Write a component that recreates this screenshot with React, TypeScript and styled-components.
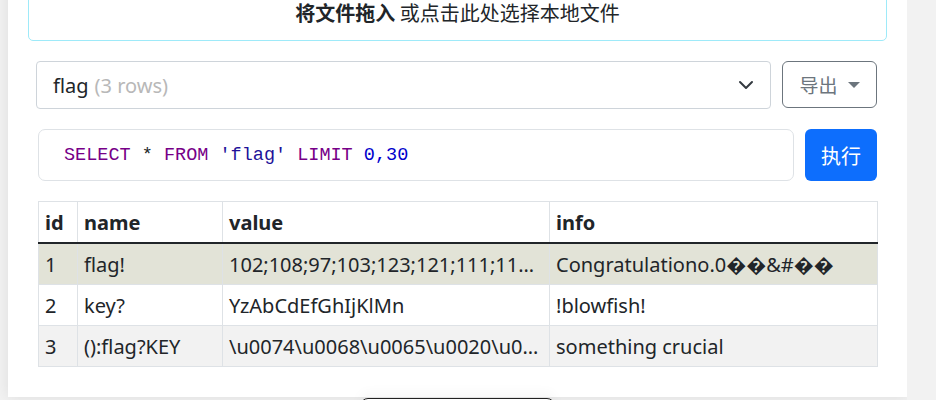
import React from "react";
import styled, { createGlobalStyle } from "styled-components";

const Global = createGlobalStyle`
  html, body { margin: 0; padding: 0; }
  body {
    background: #f2f2f2;
    font-family: "Noto Sans", "Noto Sans CJK SC", sans-serif;
    color: #212529;
    overflow: hidden;
  }
`;

const Page = styled.div`
  padding-left: 8px;
  width: 899px;
  height: 400px;
  overflow: hidden;
`;

const Panel = styled.div`
  background: #fff;
  margin-top: -37px;
  padding: 0 20px 30px;
  box-shadow: 0 0 14px rgba(0, 0, 0, 0.09);
`;

const DropZone = styled.div`
  height: 78px;
  border: 1px solid #9eeaf9;
  border-radius: 5px;
  box-sizing: border-box;
  display: flex;
  align-items: flex-end;
  justify-content: center;
  padding-bottom: 13px;
  font-size: 20px;
  font-family: "Noto Sans CJK SC", sans-serif;
  color: #212529;
  b { font-weight: 700; }
`;

const Content = styled.div`
  padding: 20px 10px 0 8px;
  display: flex;
  flex-direction: column;
  gap: 20px;
`;

const Row = styled.div<{ $inset?: number }>`
  display: flex;
  gap: 11px;
  padding-left: ${(p) => p.$inset ?? 0}px;
`;

const Select = styled.div`
  flex: 1;
  height: 48px;
  box-sizing: border-box;
  border: 1px solid #ced4da;
  border-radius: 4px;
  display: flex;
  align-items: center;
  padding: 0 16px 0 16px;
  font-size: 20px;
  color: #212529;
`;

const Muted = styled.span`
  color: #b8b8b8;
  margin-left: 6px;
`;

const Grow = styled.span`
  flex: 1;
`;

const OutlineBtn = styled.button`
  width: 95px;
  height: 47px;
  border: 1px solid #6c757d;
  border-radius: 6px;
  background: #fff;
  color: #6c757d;
  font-size: 19px;
  font-family: "Noto Sans CJK SC", sans-serif;
  display: flex;
  align-items: center;
  justify-content: center;
  gap: 10px;
  padding: 0;
`;

const Caret = styled.span`
  width: 0;
  height: 0;
  border-left: 6px solid transparent;
  border-right: 6px solid transparent;
  border-top: 6px solid #6c757d;
`;

const SqlBox = styled.div`
  flex: 1;
  height: 52px;
  box-sizing: border-box;
  border: 1px solid #dee2e6;
  border-radius: 7px;
  display: flex;
  align-items: center;
  padding-left: 25px;
`;

const Code = styled.code`
  font-family: "Liberation Mono", monospace;
  font-size: 18.5px;
  white-space: pre;
  color: #212529;
`;

const Tok = styled.span<{ $c: string }>`
  color: ${(p) => p.$c};
`;

const PrimaryBtn = styled.button`
  width: 72px;
  height: 52px;
  border: none;
  border-radius: 6px;
  background: #0d6efd;
  color: #fff;
  font-size: 20px;
  font-family: "Noto Sans CJK SC", sans-serif;
  padding: 0;
`;

const Table = styled.table`
  margin-left: 2px;
  width: 839px;
  border-collapse: collapse;
  table-layout: fixed;
  font-size: 20px;
  font-family: "Noto Sans", "DejaVu Sans", sans-serif;
`;

const Th = styled.th`
  text-align: left;
  font-weight: 700;
  height: 40px;
  padding: 0 6px;
  border: 1px solid #dee2e6;
  border-bottom: 2px solid #212529;
`;

const Tr = styled.tr<{ $bg: string }>`
  background: ${(p) => p.$bg};
`;

const Td = styled.td`
  height: 40px;
  padding: 0 6px;
  border: 1px solid #dee2e6;
  white-space: nowrap;
  overflow: hidden;
  text-overflow: ellipsis;
`;

const Floating = styled.div`
  margin: 1px auto 0;
  width: 195px;
  height: 30px;
  box-sizing: border-box;
  border: 1px solid #222;
  border-radius: 8px;
  background: #fff;
  box-shadow: 0 -6px 12px rgba(0, 0, 0, 0.03);
`;

const rows = [
  {
    id: "1",
    name: "flag!",
    value: "102;108;97;103;123;121;111;117;95;102;111;117;110;100;95;105;116;125",
    info: "Congratulationo.0\uFFFD\uFFFD&#\uFFFD\uFFFD",
    bg: "#e2e3d7",
  },
  { id: "2", name: "key?", value: "YzAbCdEfGhIjKlMn", info: "!blowfish!", bg: "#ffffff" },
  {
    id: "3",
    name: "():flag?KEY",
    value: "\\u0074\\u0068\\u0065\\u0020\\u006b\\u0065\\u0079",
    info: "something crucial",
    bg: "#f2f2f2",
  },
];

export default function App() {
  return (
    <Page>
      <Global />
      <Panel>
        <DropZone>
          <b>将文件拖入</b>&nbsp;或点击此处选择本地文件
        </DropZone>
        <Content>
          <Row>
            <Select>
              <span>flag</span>
              <Muted>(3 rows)</Muted>
              <Grow />
              <svg width="16" height="16" viewBox="0 0 16 16">
                <path d="M2 5l6 6 6-6" fill="none" stroke="#343a40" strokeWidth="2" strokeLinecap="round" strokeLinejoin="round" />
              </svg>
            </Select>
            <OutlineBtn>
              导出
              <Caret />
            </OutlineBtn>
          </Row>
          <Row $inset={2}>
            <SqlBox>
              <Code>
                <Tok $c="#770088">SELECT</Tok>{" * "}
                <Tok $c="#770088">FROM</Tok>{" "}
                <Tok $c="#221199">'flag'</Tok>{" "}
                <Tok $c="#770088">LIMIT</Tok>{" "}
                <Tok $c="#0000cc">0,30</Tok>
              </Code>
            </SqlBox>
            <PrimaryBtn>执行</PrimaryBtn>
          </Row>
          <Table>
            <colgroup>
              <col style={{ width: 39 }} />
              <col style={{ width: 145 }} />
              <col style={{ width: 327 }} />
              <col style={{ width: 328 }} />
            </colgroup>
            <thead>
              <tr>
                <Th>id</Th>
                <Th>name</Th>
                <Th>value</Th>
                <Th>info</Th>
              </tr>
            </thead>
            <tbody>
              {rows.map((r) => (
                <Tr key={r.id} $bg={r.bg}>
                  <Td>{r.id}</Td>
                  <Td>{r.name}</Td>
                  <Td>{r.value}</Td>
                  <Td>{r.info}</Td>
                </Tr>
              ))}
            </tbody>
          </Table>
        </Content>
      </Panel>
      <Floating />
    </Page>
  );
}
